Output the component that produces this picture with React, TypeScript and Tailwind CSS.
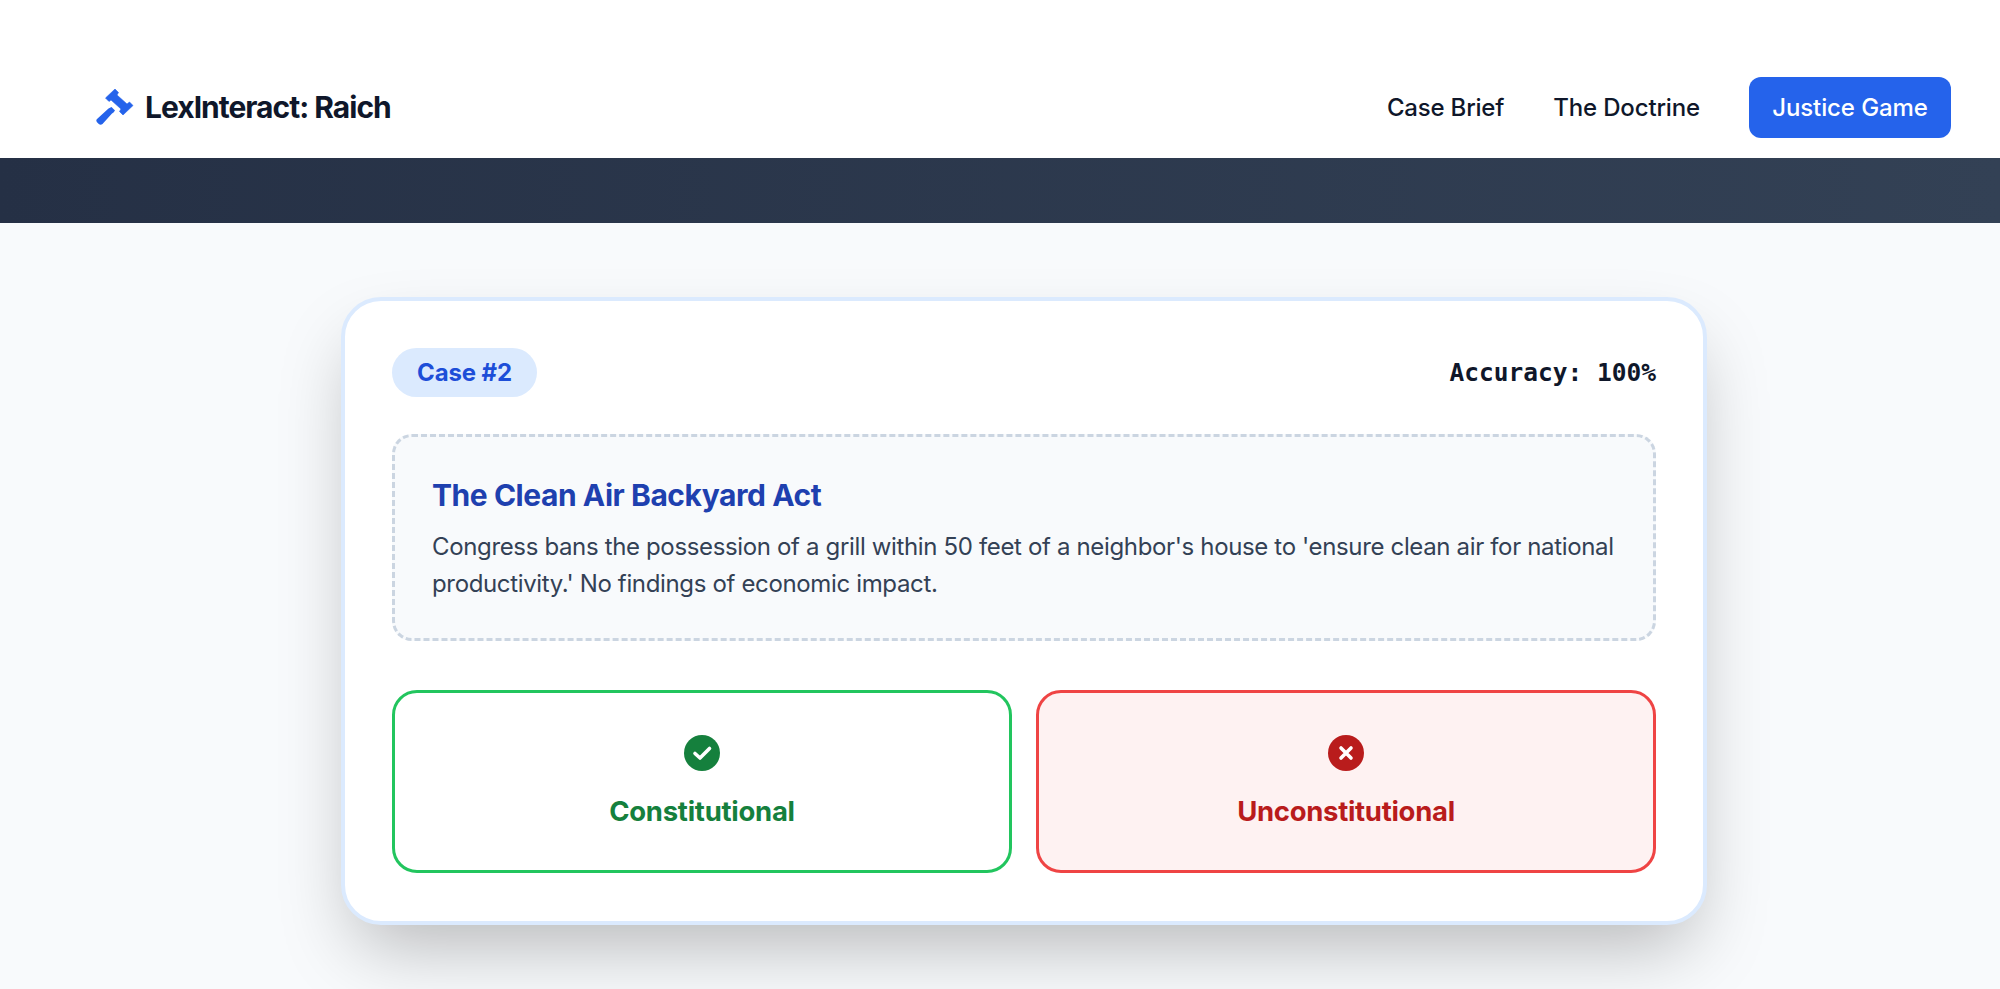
import React from 'react';

function GavelIcon() {
  return (
    <svg viewBox="6 5 38 38" className="w-[38px] h-[38px] text-[#2563eb]" fill="currentColor">
      {/* head */}
      <path d="M25 5 L28.5 8.5 L27 11 L37 20 L39.5 18 L43 21.5 L33 31 L29.5 27.5 L31 25 L21 16 L19 17.5 L15.5 14 Z" stroke="currentColor" strokeWidth="0.6" strokeLinejoin="round" />
      {/* handle */}
      <path d="M18.5 24.5 L21.5 23 L25 26.5 L23.5 28.5 L22 29.5 L12.5 40 Q10.5 41.5 8.8 40 L7 38.2 Q5.6 36.5 7 35 Z" />
    </svg>
  );
}

function CheckBadge() {
  return (
    <svg viewBox="0 0 36 36" className="w-[36px] h-[36px]">
      <circle cx="18" cy="18" r="18" fill="#15803d" />
      <path d="M11 18.5 L16 23 L25.5 13.5" fill="none" stroke="#fff" strokeWidth="3.6" strokeLinecap="round" strokeLinejoin="round" />
    </svg>
  );
}

function CrossBadge() {
  return (
    <svg viewBox="0 0 36 36" className="w-[36px] h-[36px]">
      <circle cx="18" cy="18" r="18" fill="#b91c1c" />
      <path d="M13 13 L23 23 M23 13 L13 23" fill="none" stroke="#fff" strokeWidth="3.6" strokeLinecap="round" />
    </svg>
  );
}

export default function App() {
  return (
    <div className="min-h-[989px] bg-[#f8fafc] font-['Inter',sans-serif] overflow-hidden">
      {/* Nav */}
      <nav className="h-[158px] bg-white flex items-start justify-between pl-[96px] pr-[49px] pt-[77px]">
        <div className="h-[61px] flex items-center gap-[11px]">
          <GavelIcon />
          <span className="text-[30px] font-bold tracking-[-1px] text-[#0f172a]">LexInteract: Raich</span>
        </div>
        <div className="flex items-center gap-[49px]">
          <a className="text-[24px] font-medium tracking-[-0.2px] text-[#0f172a]">Case Brief</a>
          <a className="text-[24px] font-medium tracking-[-0.15px] text-[#0f172a]">The Doctrine</a>
          <button className="h-[61px] w-[202px] rounded-[12px] bg-[#2563eb] text-[24px] font-medium tracking-[-0.1px] text-white">
            Justice Game
          </button>
        </div>
      </nav>

      <div className="h-[65px] bg-linear-to-r from-[#253045] to-[#334155]" />

      {/* Game card */}
      <main className="pt-[74px] pl-[341px] pr-[293px]">
        <div className="border-[4px] border-[#dbeafe] rounded-[40px] bg-white px-[47px] pt-[47px] pb-[48px] shadow-[0_35px_75px_-15px_rgba(0,0,0,0.27)]">
          <div className="flex items-center justify-between mb-[37px]">
            <span className="h-[49px] px-[25px] flex items-center rounded-full bg-[#dbeafe] text-[24px] font-bold tracking-[-0.1px] text-[#1d4ed8]">
              Case #2
            </span>
            <span className="pt-[2px] font-['DejaVu_Sans_Mono',monospace] font-bold text-[24.5px] text-[#0f172a]">Accuracy: 100%</span>
          </div>

          <div className="h-[207px] border-[3px] border-dashed border-[#cbd5e1] rounded-[20px] bg-[#f8fafc] pl-[37px] pr-[30px] pt-[36px]">
            <h2 className="text-[30px] leading-[45px] font-bold tracking-[-0.45px] text-[#1e40af] mb-[10px]">The Clean Air Backyard Act</h2>
            <p className="text-[24px] leading-[37px] tracking-[-0.35px] text-[#334155]">
              Congress bans the possession of a grill within 50 feet of a neighbor's house to 'ensure clean air for national productivity.' No findings of economic impact.
            </p>
          </div>

          <div className="grid grid-cols-2 gap-[24px] mt-[49px]">
            <button className="h-[183px] border-[3px] border-[#22c55e] rounded-[25px] bg-white flex flex-col items-center justify-center gap-[23px]">
              <CheckBadge />
              <span className="text-[27.5px] leading-[34px] font-bold tracking-[-0.27px] text-[#15803d]">Constitutional</span>
            </button>
            <button className="h-[183px] border-[3px] border-[#ef4444] rounded-[25px] bg-[#fef2f2] flex flex-col items-center justify-center gap-[23px]">
              <CrossBadge />
              <span className="text-[27.5px] leading-[34px] font-bold tracking-[-0.3px] text-[#b91c1c]">Unconstitutional</span>
            </button>
          </div>
        </div>
      </main>
    </div>
  );
}
